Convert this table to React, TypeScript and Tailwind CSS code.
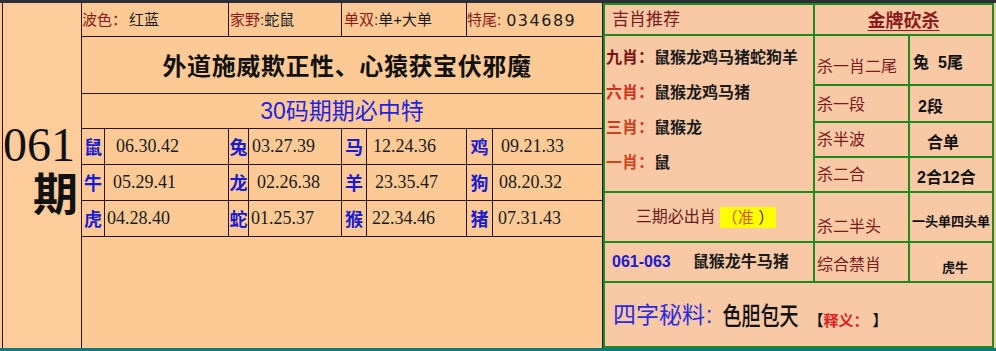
const rows = [
  [
    { z: '鼠', v: '06.30.42', p: 'pl-[11px]' },
    { z: '兔', v: '03.27.39', p: 'pl-[3px]' },
    { z: '马', v: '12.24.36', p: 'pl-[6px]' },
    { z: '鸡', v: '09.21.33', p: 'pl-[8px]' },
  ],
  [
    { z: '牛', v: '05.29.41', p: 'pl-[8px]' },
    { z: '龙', v: '02.26.38', p: 'pl-[8px]' },
    { z: '羊', v: '23.35.47', p: 'pl-[8px]' },
    { z: '狗', v: '08.20.32', p: 'pl-[6px]' },
  ],
  [
    { z: '虎', v: '04.28.40', p: 'pl-[2px]' },
    { z: '蛇', v: '01.25.37', p: 'pl-[2px]' },
    { z: '猴', v: '22.34.46', p: 'pl-[5px]' },
    { z: '猪', v: '07.31.43', p: 'pl-[5px]' },
  ],
];

const labelW = ['w-[23px]', 'w-[20px]', 'w-[25px]', 'w-[26px]'];
const valueW = ['w-[124px] border-r', 'w-[93px] border-r', 'w-[100px] border-r', 'flex-1'];

const jixiao = [
  { l: '九肖：', c: 'text-[#7a1212]', v: '鼠猴龙鸡马猪蛇狗羊' },
  { l: '六肖：', c: 'text-[#d0301c]', v: '鼠猴龙鸡马猪' },
  { l: '三肖：', c: 'text-[#c8421e]', v: '鼠猴龙' },
  { l: '一肖：', c: 'text-[#d2441e]', v: '鼠' },
];

export default function App() {
  return (
    <div className="w-[996px] h-[351px] flex flex-col bg-[#fdca96] font-['Liberation_Sans','Noto_Sans_CJK_SC',sans-serif] overflow-hidden">
      <div className="h-[3px] bg-[#2d2d3a]" />
      <div className="h-[345px] flex">
        {/* left part */}
        <div className="w-[603px] flex pl-[2px]">
          <div className="w-[79px] border-l border-[#2a1608] bg-[#fdcc9a] flex flex-col items-end pt-[118px] pr-[3px]">
            <div className="h-[48px] leading-[48px] text-[48px] mr-[3px] text-[#111] font-['Liberation_Serif',serif]">061</div>
            <div className="h-[46px] leading-[46px] text-[45px] font-bold text-[#111] font-['Noto_Sans_CJK_SC',sans-serif]">期</div>
          </div>
          <div className="w-[522px] border-l border-r border-[#2a1608] flex flex-col">
            <div className="h-[34px] border-b border-[#2a1608] flex text-[15px] items-center">
              <div className="w-[147px] h-full border-r border-[#2a1608] flex items-center pt-[2px]">
                <span className="text-[#8b1a1a]">波色：</span>
                <span className="ml-[2px] text-[#1a1a1a]">红蓝</span>
              </div>
              <div className="w-[113px] h-full border-r border-[#2a1608] flex items-center pt-[2px]">
                <span className="text-[#8b1a1a] ml-[1px]">家野</span>
                <span className="text-[#1a1a1a]">:蛇鼠</span>
              </div>
              <div className="w-[125px] h-full border-r border-[#2a1608] flex items-center pt-[2px]">
                <span className="text-[#8b1a1a] ml-[2px]">单双</span>
                <span className="text-[#1a1a1a]">:单+大单</span>
              </div>
              <div className="flex-1 h-full flex items-center pt-[2px]">
                <span className="text-[#8b1a1a]">特尾</span>
                <span className="text-[#1a1a1a]">:</span>
                <span className="ml-[5px] text-[#1a1a1a] text-[16px] tracking-[1.5px] font-['DejaVu_Sans',sans-serif]">034689</span>
              </div>
            </div>
            <div className="h-[57px] border-b border-[#2a1608] flex items-center justify-center pl-[10px]">
              <span className="text-[24px] font-bold tracking-[0.6px] text-[#111] font-['Noto_Sans_CJK_SC',sans-serif]">
                外道施威欺正性、心猿获宝伏邪魔
              </span>
            </div>
            <div className="h-[35px] border-b border-[#2a1608] flex items-center justify-center">
              <span className="text-[23px] text-[#2323e0] leading-none">30码期期必中特</span>
            </div>
            {rows.map((row, ri) => (
              <div key={ri} className="h-[36px] border-b border-[#2a1608] flex">
                {row.map((c, ci) => (
                  <div key={ci} className="flex h-full">
                    <div className={`${labelW[ci]} h-full border-r border-[#2a1608] flex items-center justify-center text-[18px] font-bold text-[#1a1ad0] font-['Noto_Sans_CJK_SC',sans-serif]`}>
                      {c.z}
                    </div>
                    <div className={`${valueW[ci]} ${c.p} h-full border-[#2a1608] flex items-center text-[18px] text-[#1a1a1a] font-['Liberation_Serif',serif]`}>
                      {c.v}
                    </div>
                  </div>
                ))}
              </div>
            ))}
            <div className="flex-1" />
          </div>
        </div>

        {/* right part */}
        <div className="w-[391px] h-full bg-[#1c8c1c] p-[2px] grid grid-cols-[208px_93px_82px] grid-rows-[29px_48px_35px_33px_33px_48px_38px_63px] gap-[2px] text-[#111]">
          <div className="bg-[#f9c9a6] flex items-center pl-[7px] text-[17px] text-[#7a1a1a]">吉肖推荐</div>
          <div className="col-span-2 bg-[#f9c9a6] flex items-center justify-center">
            <span className="text-[18px] font-bold underline underline-offset-[3px] text-[#8b1a1a] font-['Noto_Sans_CJK_SC',sans-serif]">金牌砍杀</span>
          </div>

          <div className="row-span-4 bg-[#f9c9a6] flex flex-col pt-[4px] pl-[1px]">
            {jixiao.map((j, i) => (
              <div key={i} className="h-[35px] flex items-center text-[16px] whitespace-nowrap">
                <span className={`${j.c} w-[48px] shrink-0 font-bold`}>{j.l}</span>
                <span className="font-bold text-[#1a1a1a]">{j.v}</span>
              </div>
            ))}
          </div>

          <div className="bg-[#f9c9a6] flex items-center pl-[2px] pt-[14px] text-[16px] text-[#7a1a1a]">杀一肖二尾</div>
          <div className="bg-[#f9c9a6] flex items-center pl-[3px] pt-[6px] text-[16px] font-bold text-[#111]">
            兔<span className="ml-[9px]">5尾</span>
          </div>

          <div className="bg-[#f9c9a6] flex items-center pl-[2px] pt-[3px] text-[16px] text-[#7a1a1a]">杀一段</div>
          <div className="bg-[#f9c9a6] flex items-center pl-[8px] pt-[6px] text-[16px] font-bold text-[#111]">2段</div>

          <div className="bg-[#f9c9a6] flex items-center pl-[2px] text-[16px] text-[#7a1a1a]">杀半波</div>
          <div className="bg-[#f9c9a6] flex items-center pl-[17px] pt-[7px] text-[16px] font-bold text-[#111]">合单</div>

          <div className="bg-[#f9c9a6] flex items-center pl-[2px] text-[16px] text-[#7a1a1a]">杀二合</div>
          <div className="bg-[#f9c9a6] flex items-center pl-[7px] pt-[7px] text-[16px] font-bold text-[#111]">2合12合</div>

          <div className="bg-[#f9c9a6] flex items-center justify-center pr-[6px] text-[16px]">
            <span className="text-[#6a1a1a]">三期必出肖</span>
            <span className="ml-[4px] bg-[#ffff00] px-[2px] leading-[21px] text-[#d0600f]">
              （准<span className="text-[#5a2a10]">&nbsp;）</span>
            </span>
          </div>
          <div className="bg-[#f9c9a6] flex items-center pl-[2px] pt-[20px] text-[16px] text-[#7a1a1a]">杀二半头</div>
          <div className="bg-[#f9c9a6] flex items-center pl-[2px] pt-[10px] text-[13px] font-bold text-[#111] whitespace-nowrap overflow-visible">一头单四头单</div>

          <div className="bg-[#f9c9a6] flex items-center pl-[7px] text-[16px]">
            <span className="font-bold text-[#1a1ad0] font-['Liberation_Sans',sans-serif]">061-063</span>
            <span className="ml-[22px] font-bold text-[#1a1a1a]">鼠猴龙牛马猪</span>
          </div>
          <div className="bg-[#f9c9a6] flex items-center pl-[2px] pt-[6px] text-[16px] text-[#7a1a1a]">综合禁肖</div>
          <div className="bg-[#f9c9a6] flex items-center pl-[32px] pt-[12px] text-[13px] font-bold text-[#111]">虎牛</div>

          <div className="col-span-3 bg-[#f9c9a6] flex items-center pl-[8px] pt-[2px]">
            <span className="text-[23px] text-[#2a2ae0]">四字秘料</span>
            <span className="text-[23px] text-[#2a2ae0] ml-[1px]">:</span>
            <span className="ml-[10px] inline-block text-[19px] scale-y-[1.3] font-medium text-[#111] font-['Noto_Sans_CJK_SC',sans-serif]">色胆包天</span>
            <span className="ml-[10px] mt-[12px] text-[15px] font-bold">
              <span className="text-[#111]">【</span>
              <span className="text-[#e02020]">释义：</span>
              <span className="text-[#111]">&nbsp;】</span>
            </span>
          </div>
        </div>
        <div className="w-[2px] bg-[#f9c9a6]" />
      </div>
      <div className="h-[3px] bg-[#127878]" />
    </div>
  );
}
